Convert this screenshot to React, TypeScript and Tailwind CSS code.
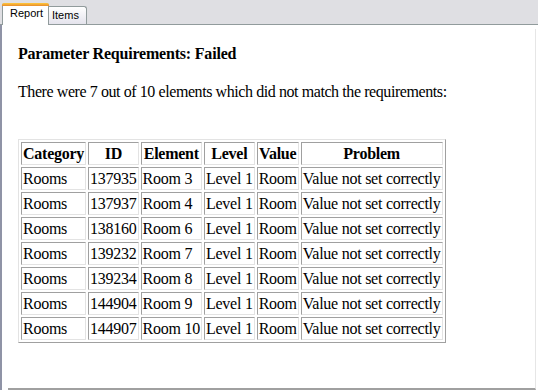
const rows = [
  { id: "137935", element: "Room 3" },
  { id: "137937", element: "Room 4" },
  { id: "138160", element: "Room 6" },
  { id: "139232", element: "Room 7" },
  { id: "139234", element: "Room 8" },
  { id: "144904", element: "Room 9" },
  { id: "144907", element: "Room 10" },
];

const headers = ["Category", "ID", "Element", "Level", "Value", "Problem"];

const cellClass =
  "border border-t-[#a0a0a0] border-l-[#a0a0a0] border-r-[#e3e3e3] border-b-[#e3e3e3] p-[1px] leading-[19px] whitespace-nowrap";

export default function App() {
  return (
    <div className="w-[538px] h-[390px] bg-[#dfdfe3] flex flex-col overflow-hidden">
      {/* tab strip */}
      <div className="h-[25px] flex items-end pl-[2px] border-b border-[#919b9c] font-['Liberation_Sans',Arial,sans-serif] text-[11px] text-black">
        <div className="relative -mb-px h-[22px] w-[47px] bg-white border-x border-[#919b9c] rounded-t-[3px] flex flex-col z-10">
          <div className="h-[3px] rounded-t-[2px] bg-gradient-to-b from-[#ffc83c] to-[#e68b2c] -mx-px" />
          <div className="pl-[7px] pt-[1px] leading-[13px]">Report</div>
        </div>
        <div className="h-[18px] w-[38px] bg-gradient-to-b from-[#ffffff] to-[#e4e3ec] border-t border-r border-[#919b9c] rounded-tr-[3px] pl-[3px] pt-[2px] leading-[13px]">
          Items
        </div>
      </div>

      {/* tab page */}
      <div className="flex-1 flex bg-white border-l-2 border-l-[#8f93a6] pl-[6px] pt-[4px] pr-[2px]">
        <div className="flex-1 flex flex-col border-r border-r-[#e6e6e6] border-b-2 border-b-[#a0a0a0] pl-[10px] font-['Liberation_Serif','Times_New_Roman',serif] text-[16px] text-black">
          <h1 className="mt-[15px] font-bold leading-[19px] tracking-[-0.2px]">
            Parameter Requirements: Failed
          </h1>
          <p className="mt-[19px] leading-[19px] tracking-[-0.42px]">
            There were 7 out of 10 elements which did not match the requirements:
          </p>
          <div className="mt-[38px]">
            <table className="border-separate border-spacing-[2px] border border-t-[#e3e3e3] border-l-[#e3e3e3] border-r-[#a0a0a0] border-b-[#a0a0a0] tracking-[-0.25px]">
              <thead>
                <tr>
                  {headers.map((h) => (
                    <th key={h} className={`${cellClass} font-bold text-center`}>
                      {h}
                    </th>
                  ))}
                </tr>
              </thead>
              <tbody>
                {rows.map((r) => (
                  <tr key={r.id}>
                    <td className={cellClass}>Rooms</td>
                    <td className={cellClass}>{r.id}</td>
                    <td className={cellClass}>{r.element}</td>
                    <td className={cellClass}>Level 1</td>
                    <td className={cellClass}>Room</td>
                    <td className={cellClass}>Value not set correctly</td>
                  </tr>
                ))}
              </tbody>
            </table>
          </div>
        </div>
      </div>
    </div>
  );
}
